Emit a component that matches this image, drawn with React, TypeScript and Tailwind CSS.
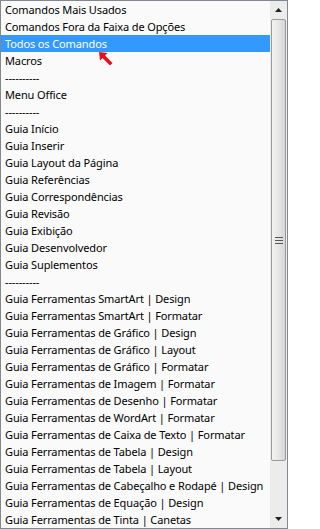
const items = [
  "Comandos Mais Usados",
  "Comandos Fora da Faixa de Opções",
  "Todos os Comandos",
  "Macros",
  "----------",
  "Menu Office",
  "----------",
  "Guia Início",
  "Guia Inserir",
  "Guia Layout da Página",
  "Guia Referências",
  "Guia Correspondências",
  "Guia Revisão",
  "Guia Exibição",
  "Guia Desenvolvedor",
  "Guia Suplementos",
  "----------",
  "Guia Ferramentas SmartArt | Design",
  "Guia Ferramentas SmartArt | Formatar",
  "Guia Ferramentas de Gráfico | Design",
  "Guia Ferramentas de Gráfico | Layout",
  "Guia Ferramentas de Gráfico | Formatar",
  "Guia Ferramentas de Imagem | Formatar",
  "Guia Ferramentas de Desenho | Formatar",
  "Guia Ferramentas de WordArt | Formatar",
  "Guia Ferramentas de Caixa de Texto | Formatar",
  "Guia Ferramentas de Tabela | Design",
  "Guia Ferramentas de Tabela | Layout",
  "Guia Ferramentas de Cabeçalho e Rodapé | Design",
  "Guia Ferramentas de Equação | Design",
  "Guia Ferramentas de Tinta | Canetas",
];

function Scrollbar() {
  return (
    <div className="flex w-[17px] shrink-0 flex-col bg-[#ececec]">
      <div className="flex h-[18px] items-center justify-center">
        <svg width="7" height="4" viewBox="0 0 7 4">
          <path d="M0 4 L3.5 0 L7 4 Z" fill="#222" />
        </svg>
      </div>
      <div className="mx-[1px] flex h-[442px] items-center justify-center rounded-[2px] border border-[#9a9a9a] bg-gradient-to-r from-[#f2f2f2] via-[#e6e6e6] to-[#d6d6d6]">
        <div className="flex flex-col gap-[2px]">
          <div className="h-[1px] w-[8px] bg-[#555]" />
          <div className="h-[1px] w-[8px] bg-[#555]" />
          <div className="h-[1px] w-[8px] bg-[#555]" />
        </div>
      </div>
      <div className="flex-1" />
      <div className="flex h-[18px] items-center justify-center">
        <svg width="7" height="4" viewBox="0 0 7 4">
          <path d="M0 0 L7 0 L3.5 4 Z" fill="#222" />
        </svg>
      </div>
    </div>
  );
}

export default function App() {
  return (
    <div className="h-[529px] w-[288px] overflow-hidden bg-white">
      <div className="flex h-full w-full border border-[#828790] bg-[#fafafa]">
        <div className="relative min-w-0 flex-1 overflow-hidden">
          {items.map((item, i) => (
            <div
              key={i}
              className={
                i === 2
                  ? "h-[17px] whitespace-nowrap bg-[#3399ff] pl-[4px] text-[11px] leading-[17px] tracking-[-0.12px] text-white"
                  : "h-[17px] whitespace-nowrap pl-[4px] text-[11px] leading-[17px] tracking-[-0.12px] text-black"
              }
              style={{ fontFamily: '"Noto Sans", sans-serif' }}
            >
              {item}
            </div>
          ))}
          <svg className="absolute left-[97px] top-[50px]" width="16" height="16" viewBox="0 0 16 16">
            <path d="M1 1 L9.5 2 L7 4.5 L14.5 12 L12 14.5 L4.5 7 L2 9.5 Z" fill="#e8101a" />
          </svg>
        </div>
        <Scrollbar />
      </div>
    </div>
  );
}
